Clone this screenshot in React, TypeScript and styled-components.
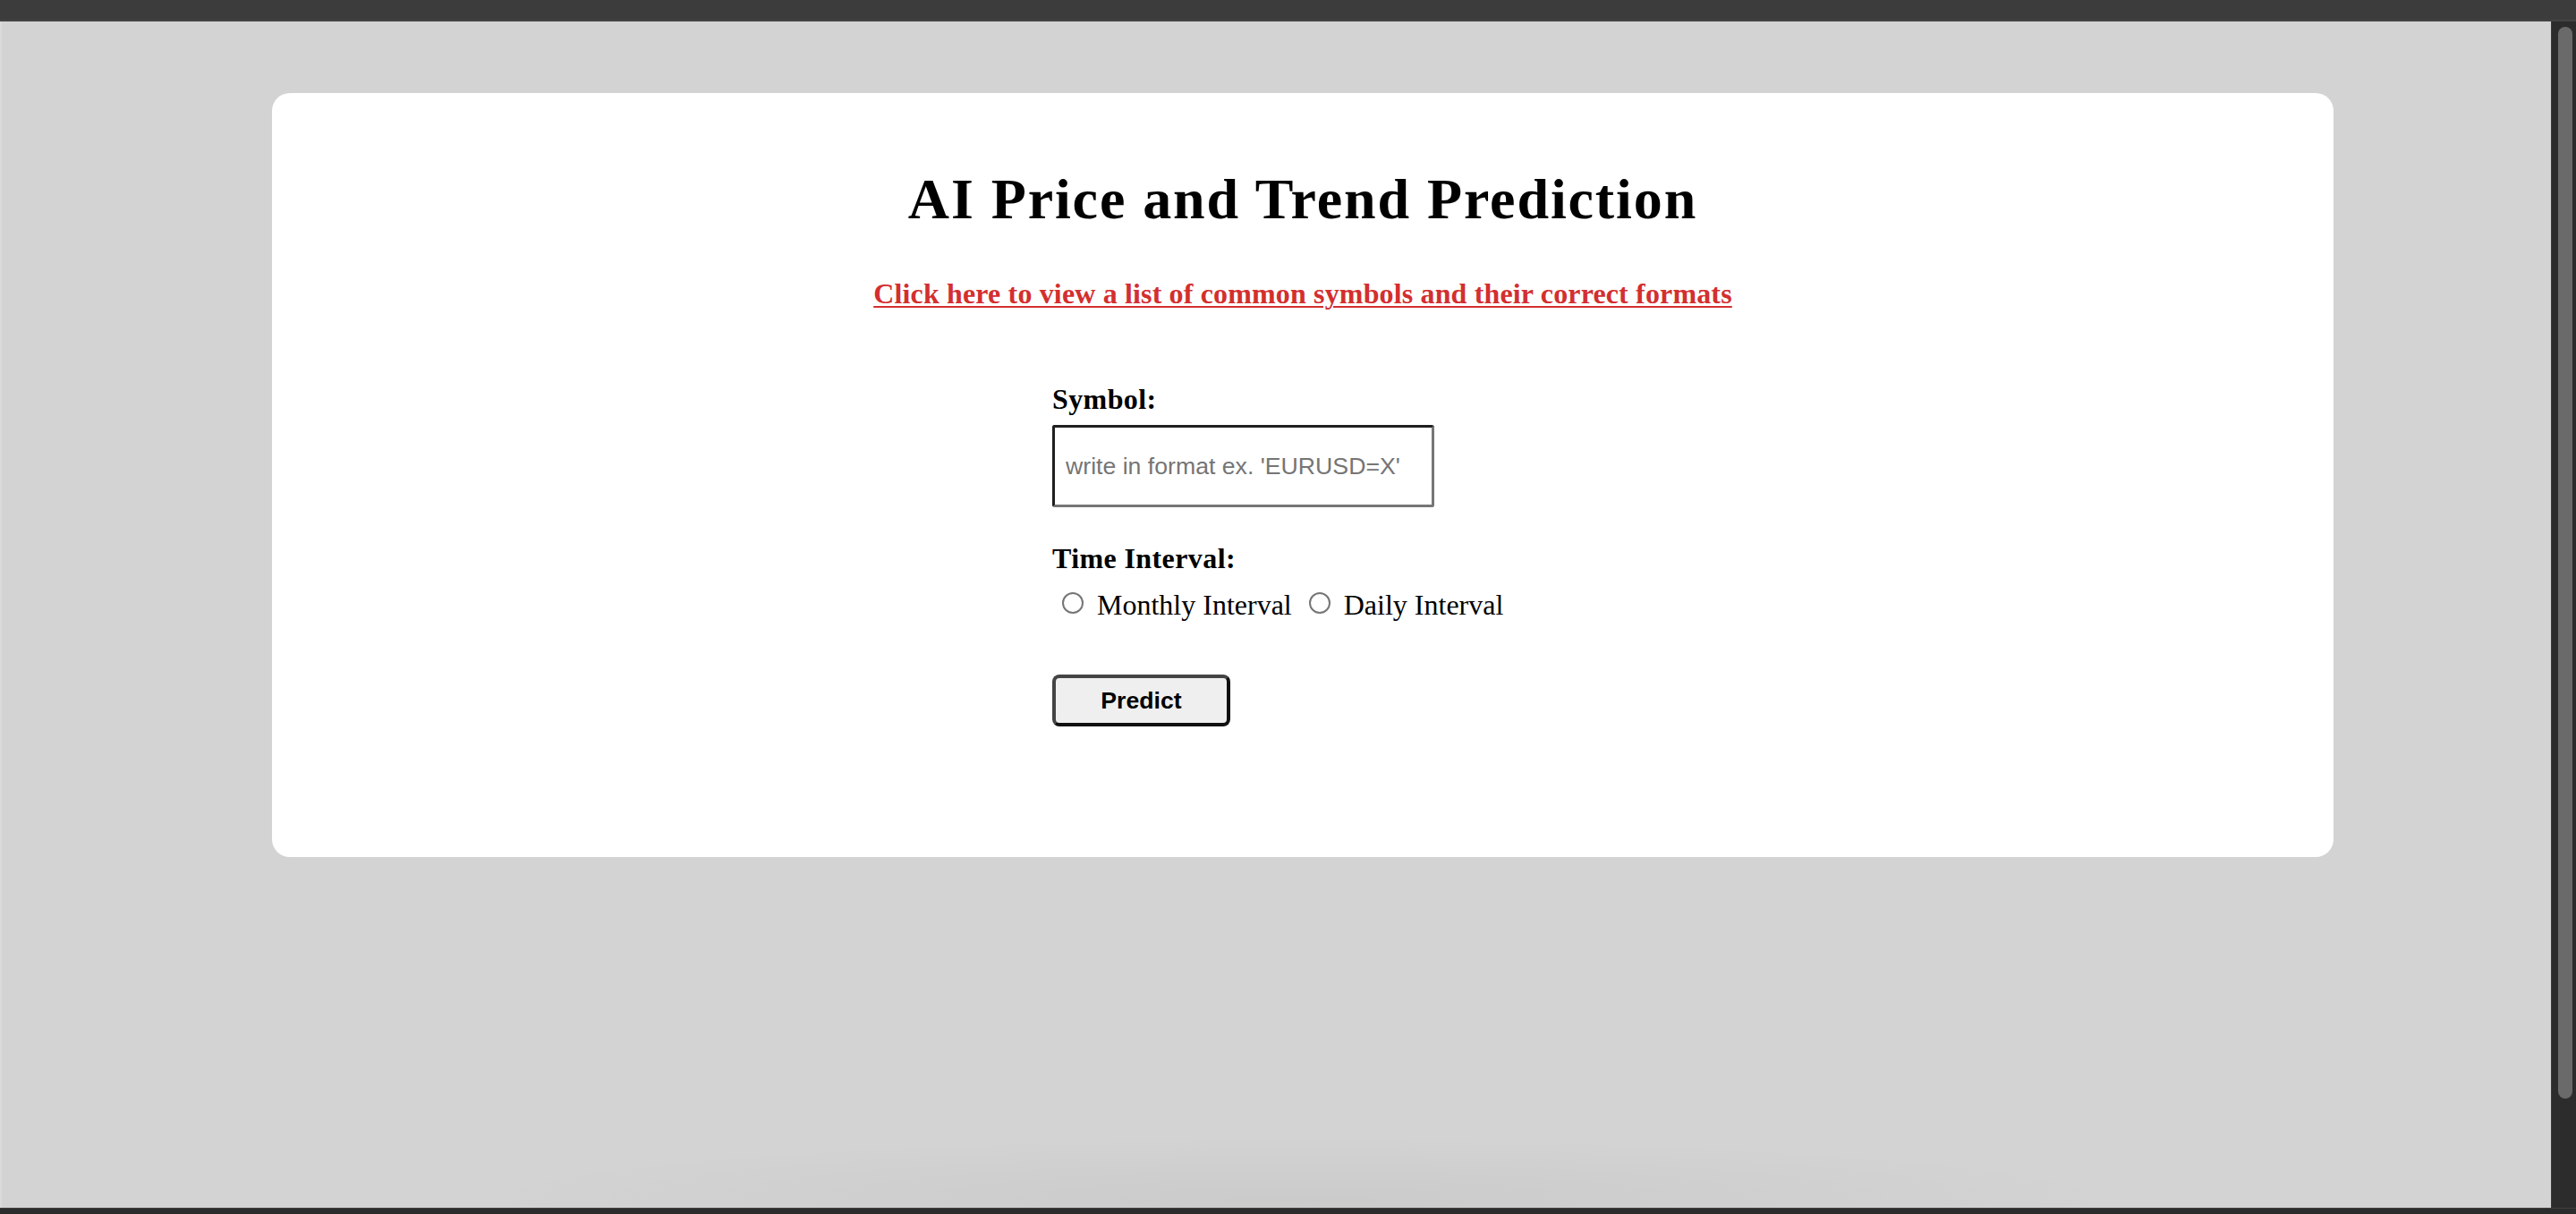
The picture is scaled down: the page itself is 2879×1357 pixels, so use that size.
import React from "react";
import styled, { createGlobalStyle } from "styled-components";

const GlobalStyle = createGlobalStyle`
  html, body {
    margin: 0;
    padding: 0;
    height: 100%;
    overflow: hidden;
  }
  body {
    font-family: "Liberation Serif", "Times New Roman", serif;
  }
  #root {
    height: 100%;
  }
`;

const Window = styled.div`
  display: grid;
  grid-template-rows: 24px 1fr 7px;
  height: 100vh;
  background: #2c2c2c;
`;

const TopBar = styled.div`
  background: #3c3c3c;
  border-bottom: 2px solid #444444;
`;

const BottomBar = styled.div`
  background: #2c2c2c;
  border-top: 1px solid #404040;
`;

const Viewport = styled.div`
  display: flex;
  min-height: 0;
`;

const Page = styled.main`
  flex: 1;
  background: #d3d3d3;
  border-left: 2px solid #dadada;
  padding-top: 80px;
  padding-left: 302px;
  position: relative;
  overflow: hidden;
  &::after {
    content: "";
    position: absolute;
    left: 500px;
    right: 450px;
    bottom: -60px;
    height: 140px;
    background: radial-gradient(ellipse at center, rgba(0, 0, 0, 0.04), rgba(0, 0, 0, 0) 70%);
    pointer-events: none;
  }
`;

const ScrollTrack = styled.div`
  width: 28px;
  background: #2c2c2c;
  border-left: 1px solid #3a3a3a;
  padding: 6px 5px 0 7px;
  box-sizing: border-box;
`;

const ScrollThumb = styled.div`
  width: 16px;
  height: 1198px;
  border-radius: 8px;
  background: #6a6a6a;
`;

const Card = styled.section`
  width: 2304px;
  height: 854px;
  box-sizing: border-box;
  background: #ffffff;
  border-radius: 20px;
  padding-top: 40px;
  display: flex;
  flex-direction: column;
  align-items: center;
`;

const Title = styled.h1`
  margin: 42px 0 0;
  font-family: "Liberation Serif", "Times New Roman", serif;
  font-size: 64px;
  line-height: 74px;
  font-weight: 700;
  letter-spacing: 1.9px;
  color: #000;
`;

const SymbolsLink = styled.a`
  margin-top: 50px;
  font-family: "Liberation Serif", "Times New Roman", serif;
  font-size: 32px;
  line-height: 37px;
  font-weight: 700;
  letter-spacing: 0.15px;
  color: #d32f2f;
  text-decoration: underline;
  text-decoration-thickness: 2px;
  text-underline-offset: 3px;
`;

const Form = styled.form`
  margin-top: 81px;
  width: 560px;
  display: flex;
  flex-direction: column;
  align-items: flex-start;
`;

const FieldLabel = styled.label<{ $gap: number }>`
  display: block;
  font-family: "Liberation Serif", "Times New Roman", serif;
  font-size: 32px;
  line-height: 37px;
  font-weight: 700;
  letter-spacing: 0.4px;
  color: #000;
  margin-top: ${(p) => p.$gap}px;
`;

const SymbolInput = styled.input`
  margin-top: 10px;
  width: 427px;
  height: 92px;
  box-sizing: border-box;
  padding: 0 12px;
  border-width: 3px;
  border-style: solid;
  border-color: #1f1f1f #767676 #767676 #1f1f1f;
  border-radius: 3px;
  font-family: "Liberation Sans", Arial, sans-serif;
  font-size: 26.67px;
  color: #000;
  outline: none;
  &::placeholder {
    color: #757575;
  }
`;

const RadioRow = styled.div`
  margin-top: 15px;
  display: flex;
  align-items: center;
  font-family: "Liberation Serif", "Times New Roman", serif;
  font-size: 32px;
  line-height: 37px;
  color: #000;
`;

const RadioOption = styled.label<{ $lead: number }>`
  display: flex;
  align-items: center;
  margin-left: ${(p) => p.$lead}px;
`;

const Radio = styled.input.attrs({ type: "radio" })`
  appearance: none;
  width: 24px;
  height: 24px;
  margin: 0 15px 5px 0;
  border: 2px solid #767676;
  border-radius: 50%;
  background: #fff;
  box-sizing: border-box;
`;

const PredictButton = styled.button`
  margin-top: 59px;
  width: 199px;
  height: 58px;
  box-sizing: border-box;
  background: #efefef;
  border: 4px solid #1c1c1c;
  border-color: #444 #111 #111 #444;
  border-radius: 8px;
  font-family: "Liberation Sans", Arial, sans-serif;
  font-size: 26.67px;
  font-weight: 700;
  color: #000;
  cursor: pointer;
`;

export default function App() {
  return (
    <>
      <GlobalStyle />
      <Window>
        <TopBar />
        <Viewport>
          <Page>
            <Card>
              <Title>AI Price and Trend Prediction</Title>
              <SymbolsLink href="#symbols">
                Click here to view a list of common symbols and their correct formats
              </SymbolsLink>
              <Form onSubmit={(e) => e.preventDefault()}>
                <FieldLabel $gap={0} htmlFor="symbol">
                  Symbol:
                </FieldLabel>
                <SymbolInput id="symbol" placeholder="write in format ex. 'EURUSD=X'" />
                <FieldLabel $gap={39}>Time Interval:</FieldLabel>
                <RadioRow>
                  <RadioOption $lead={11}>
                    <Radio name="interval" value="monthly" />
                    Monthly Interval
                  </RadioOption>
                  <RadioOption $lead={19}>
                    <Radio name="interval" value="daily" />
                    Daily Interval
                  </RadioOption>
                </RadioRow>
                <PredictButton type="submit">Predict</PredictButton>
              </Form>
            </Card>
          </Page>
          <ScrollTrack>
            <ScrollThumb />
          </ScrollTrack>
        </Viewport>
        <BottomBar />
      </Window>
    </>
  );
}
